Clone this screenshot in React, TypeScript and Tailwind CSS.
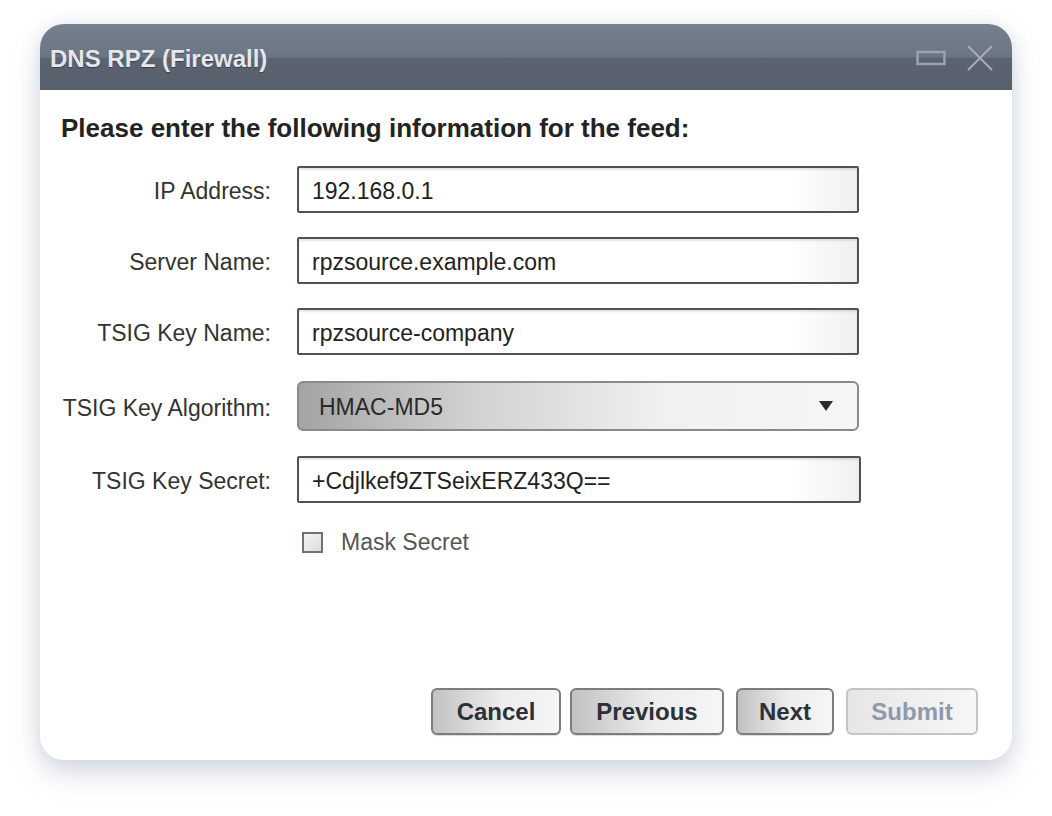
import * as React from "react";

const font = { fontFamily: '"Liberation Sans", Arial, sans-serif' };

function TextField({ value, wide }: { value: string; wide?: boolean }) {
  return (
    <div
      className={`h-[47px] ${wide ? "w-[564px]" : "w-[562px]"} flex items-center pl-[13px] pt-[3px] border-2 border-[#4e535a] rounded-[2px] bg-[linear-gradient(to_right,#ffffff_0%,#ffffff_88%,#f0f0f0_100%)] shadow-[inset_0_2px_2px_rgba(0,0,0,0.1)] text-[23px] text-[#222]`}
    >
      {value}
    </div>
  );
}

function Row({ label, children }: { label: string; children: React.ReactNode }) {
  return (
    <div className="flex items-center">
      <div className="w-[210px] pt-[4px] text-right text-[23px] text-[#333]">{label}</div>
      <div className="ml-[26px]">{children}</div>
    </div>
  );
}

function DialogButton({ label, width, disabled }: { label: string; width: string; disabled?: boolean }) {
  return (
    <button
      className={`${width} h-[47px] rounded-[6px] border-2 text-[24px] font-bold ${
        disabled
          ? "border-[#c4c4c4] text-[#8f98ad] bg-[linear-gradient(to_right,#e6e6e6,#f7f7f7)]"
          : "border-[#7d7d7d] text-[#2c3037] bg-[linear-gradient(to_right,#c2c2c2_0%,#ededed_55%,#f6f6f6_100%)] shadow-[0_1px_1px_rgba(0,0,0,0.15)]"
      }`}
    >
      {label}
    </button>
  );
}

export default function App() {
  return (
    <div className="w-[1052px] h-[816px] bg-white pt-[24px] pl-[40px]" style={font}>
      <div className="w-[972px] h-[736px] flex flex-col rounded-[24px] overflow-hidden bg-white shadow-[0_14px_28px_rgba(120,135,160,0.28),0_0_18px_rgba(140,150,170,0.18)]">
        {/* Title bar */}
        <div className="h-[66px] shrink-0 flex items-center justify-between pl-[10px] pr-[18px] bg-[linear-gradient(to_bottom,#76808e_0%,#6c7584_50%,#5b6372_52%,#575e6c_100%)]">
          <span className="pt-[3px] text-[24px] font-bold text-[#e4e7eb] [text-shadow:0_1px_1px_rgba(0,0,0,0.35)]">
            DNS RPZ (Firewall)
          </span>
          <div className="flex items-center gap-[20px] pt-[2px]">
            <svg width="30" height="16" viewBox="0 0 30 16">
              <rect x="1.5" y="2" width="27" height="12" fill="none" stroke="#9aa2ad" strokeWidth="2.5" />
            </svg>
            <svg width="28" height="28" viewBox="0 0 28 28">
              <path d="M2 2 L26 26 M26 2 L2 26" stroke="#a7aeb8" strokeWidth="2" />
            </svg>
          </div>
        </div>

        {/* Body */}
        <div className="flex-1 flex flex-col pl-[21px] pr-[34px] pt-[23px] pb-[25px]">
          <div className="text-[26px] leading-[30px] font-bold text-[#232323]">
            Please enter the following information for the feed:
          </div>

          <div className="mt-[23px] flex flex-col gap-[24px]">
            <Row label="IP Address:">
              <TextField value="192.168.0.1" />
            </Row>
            <Row label="Server Name:">
              <TextField value="rpzsource.example.com" />
            </Row>
            <Row label="TSIG Key Name:">
              <TextField value="rpzsource-company" />
            </Row>
            <div className="mt-[2px]">
              <Row label="TSIG Key Algorithm:">
                <div className="h-[50px] w-[562px] flex items-center justify-between pl-[20px] pr-[24px] rounded-[6px] border-2 border-[#8a8a8a] bg-[linear-gradient(to_right,#a4a4a4_0%,#d0d0d0_30%,#f0f0f0_65%,#f6f6f6_100%)] text-[23px] text-[#2a2a2a]">
                  <span className="pt-[3px]">HMAC-MD5</span>
                  <svg width="14" height="10" viewBox="0 0 14 10">
                    <path d="M0 0 L14 0 L7 10 Z" fill="#2b2b2b" />
                  </svg>
                </div>
              </Row>
            </div>
            <div className="mt-[1px]">
              <Row label="TSIG Key Secret:">
                <TextField value="+Cdjlkef9ZTSeixERZ433Q==" wide />
              </Row>
            </div>
          </div>

          <div className="mt-[22px] ml-[241px] flex items-center">
            <div className="w-[21px] h-[21px] border-2 border-[#6b7280] bg-[linear-gradient(to_bottom_right,#f4f4f4,#dcdcdc)]" />
            <span className="ml-[18px] text-[23px] text-[#555]">Mask Secret</span>
          </div>

          <div className="mt-auto flex justify-end items-center">
            <DialogButton label="Cancel" width="w-[130px]" />
            <div className="ml-[9px]">
              <DialogButton label="Previous" width="w-[154px]" />
            </div>
            <div className="ml-[12px]">
              <DialogButton label="Next" width="w-[98px]" />
            </div>
            <div className="ml-[12px]">
              <DialogButton label="Submit" width="w-[132px]" disabled />
            </div>
          </div>
        </div>
      </div>
    </div>
  );
}
